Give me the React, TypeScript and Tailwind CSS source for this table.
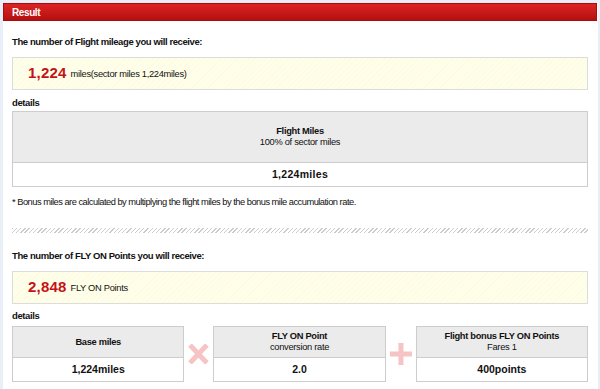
const font = "font-['Liberation_Sans',Arial,sans-serif]"

function Highlight({ value, unit }: { value: string; unit: string }) {
  return (
    <div className="mt-[8px] flex h-[33px] items-center border border-[#dcdcdc] bg-[repeating-linear-gradient(135deg,#fffee9_0px,#fffee9_3px,#fdfbe3_3px,#fdfbe3_4px)] pl-[15px]">
      <span className="text-[15px] font-bold tracking-[0.2px] text-[#c4121a]">{value}</span>
      <span className="ml-[4px] mt-[2px] text-[9.3px] tracking-[-0.3px] text-[#111]">{unit}</span>
    </div>
  )
}

function ResultBox({ title, sub, value }: { title: string; sub?: string; value: string }) {
  return (
    <div className="w-[173px] border border-[#cdcdcd]">
      <div className="flex h-[31px] flex-col items-center justify-center border-b border-[#cdcdcd] bg-[#ebebeb] text-[9.3px] leading-[11px] tracking-[-0.3px]">
        <span className="font-bold">{title}</span>
        {sub && <span>{sub}</span>}
      </div>
      <div className="flex h-[23px] items-center justify-center bg-white text-[10.5px] font-bold">
        {value}
      </div>
    </div>
  )
}

function Times() {
  return (
    <svg width="29" height="20" viewBox="0 0 29 20">
      <path d="M6 1 L23 19 M23 1 L6 19" stroke="#f6c4c4" strokeWidth="5" />
    </svg>
  )
}

function Plus() {
  return (
    <svg width="30" height="24" viewBox="0 0 30 24">
      <path d="M4 12 H26 M15 1 V23" stroke="#f6c4c4" strokeWidth="5" />
    </svg>
  )
}

export default function App() {
  return (
    <div className={`min-h-[389px] bg-[#e8eff8] pl-[3px] pr-[2px] pt-[3px] text-[#111] ${font}`}>
      <div className="min-h-[386px] bg-white">
        <div className="mr-[1px] flex h-[18px] items-center border border-[#a80c0c] bg-gradient-to-b from-[#de2424] to-[#b30f0f] pl-[8px] text-[10px] font-bold tracking-[-0.4px] text-white">
          Result
        </div>
        <div className="pl-[9px] pr-[10px]">
          <div className="mt-[14px] text-[9.5px] font-bold leading-[14px] tracking-[-0.4px]">
            The number of Flight mileage you will receive:
          </div>
          <Highlight value="1,224" unit="miles(sector miles 1,224miles)" />

          <div className="mt-[6px] text-[9.5px] font-bold leading-[14px] tracking-[-0.4px]">details</div>
          <div className="mt-[1px] border border-[#cdcdcd]">
            <div className="flex h-[51px] flex-col items-center justify-center border-b border-[#cdcdcd] bg-[#ebebeb] text-[9.3px] leading-[11px] tracking-[-0.3px]">
              <span className="font-bold">Flight Miles</span>
              <span>100% of sector miles</span>
            </div>
            <div className="flex h-[23px] items-center justify-center text-[10.5px] font-bold tracking-[0.3px]">
              1,224miles
            </div>
          </div>

          <div className="mt-[8px] text-[9.3px] leading-[14px] tracking-[-0.5px]">
            * Bonus miles are calculated by multiplying the flight miles by the bonus mile accumulation rate.
          </div>

          <div className="mt-[19px] h-[5px] bg-[repeating-linear-gradient(135deg,#cccccc_0px,#cccccc_1px,#ffffff_1px,#ffffff_3px)]" />

          <div className="mt-[16px] text-[9.5px] font-bold leading-[14px] tracking-[-0.4px]">
            The number of FLY ON Points you will receive:
          </div>
          <Highlight value="2,848" unit="FLY ON Points" />

          <div className="mt-[5px] text-[9.5px] font-bold leading-[14px] tracking-[-0.4px]">details</div>
          <div className="mt-[3px] flex items-center justify-between">
            <ResultBox title="Base miles" value="1,224miles" />
            <Times />
            <ResultBox title="FLY ON Point" sub="conversion rate" value="2.0" />
            <Plus />
            <ResultBox title="Flight bonus FLY ON Points" sub="Fares 1" value="400points" />
          </div>
        </div>
      </div>
    </div>
  )
}
